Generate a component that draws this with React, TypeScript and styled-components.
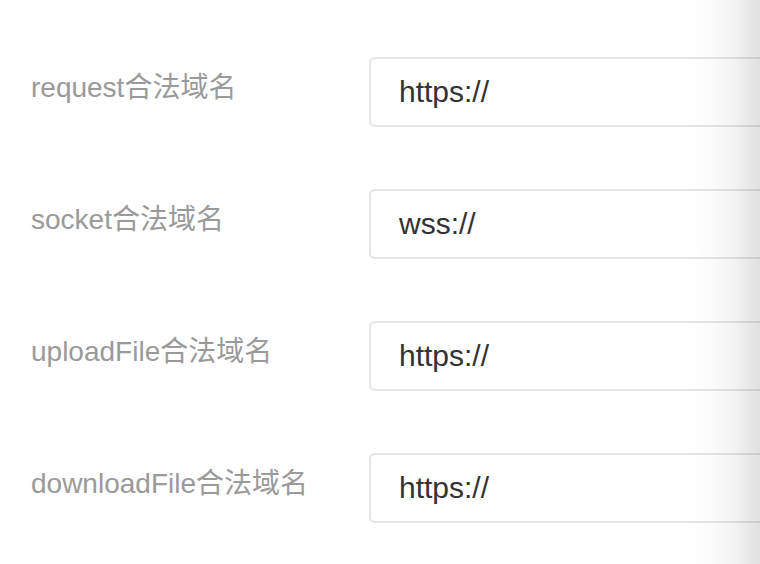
import * as React from 'react';
import styled, { createGlobalStyle } from 'styled-components';

const GlobalStyle = createGlobalStyle`
  html, body {
    margin: 0;
    padding: 0;
    background: #fff;
  }
  body {
    font-family: "Liberation Sans", Arial, "Noto Sans CJK SC", sans-serif;
    overflow: hidden;
  }
`;

const Page = styled.div`
  position: relative;
  width: 760px;
  height: 564px;
  overflow: hidden;
  padding-top: 57px;
  box-sizing: border-box;
`;

const Form = styled.div`
  display: flex;
  flex-direction: column;
  gap: 62px;
`;

const Row = styled.div`
  display: flex;
  align-items: center;
  padding-left: 31px;
`;

const Label = styled.label`
  width: 338px;
  flex-shrink: 0;
  font-size: 28px;
  color: #9a9a9a;
  margin-top: -14px;
  white-space: nowrap;
`;

const Input = styled.input`
  width: 460px;
  height: 70px;
  flex-shrink: 0;
  box-sizing: border-box;
  border: 2px solid #e6e6e8;
  border-radius: 6px;
  padding: 0 0 0 28px;
  font-family: "Liberation Sans", Arial, sans-serif;
  font-size: 30px;
  color: #333;
  background: #fff;
  outline: none;
`;

const EdgeShade = styled.div`
  position: absolute;
  top: 0;
  right: 0;
  width: 70px;
  height: 100%;
  pointer-events: none;
  background: linear-gradient(
    to right,
    rgba(0, 0, 0, 0) 0%,
    rgba(0, 0, 0, 0.02) 35%,
    rgba(0, 0, 0, 0.05) 65%,
    rgba(0, 0, 0, 0.12) 100%
  );
`;

const domains = [
  { name: 'request', value: 'https://' },
  { name: 'socket', value: 'wss://' },
  { name: 'uploadFile', value: 'https://' },
  { name: 'downloadFile', value: 'https://' },
];

export default function App() {
  return (
    <>
      <GlobalStyle />
      <Page>
        <Form>
          {domains.map(d => (
            <Row key={d.name}>
              <Label>{d.name}合法域名</Label>
              <Input defaultValue={d.value} />
            </Row>
          ))}
        </Form>
        <EdgeShade />
      </Page>
    </>
  );
}
